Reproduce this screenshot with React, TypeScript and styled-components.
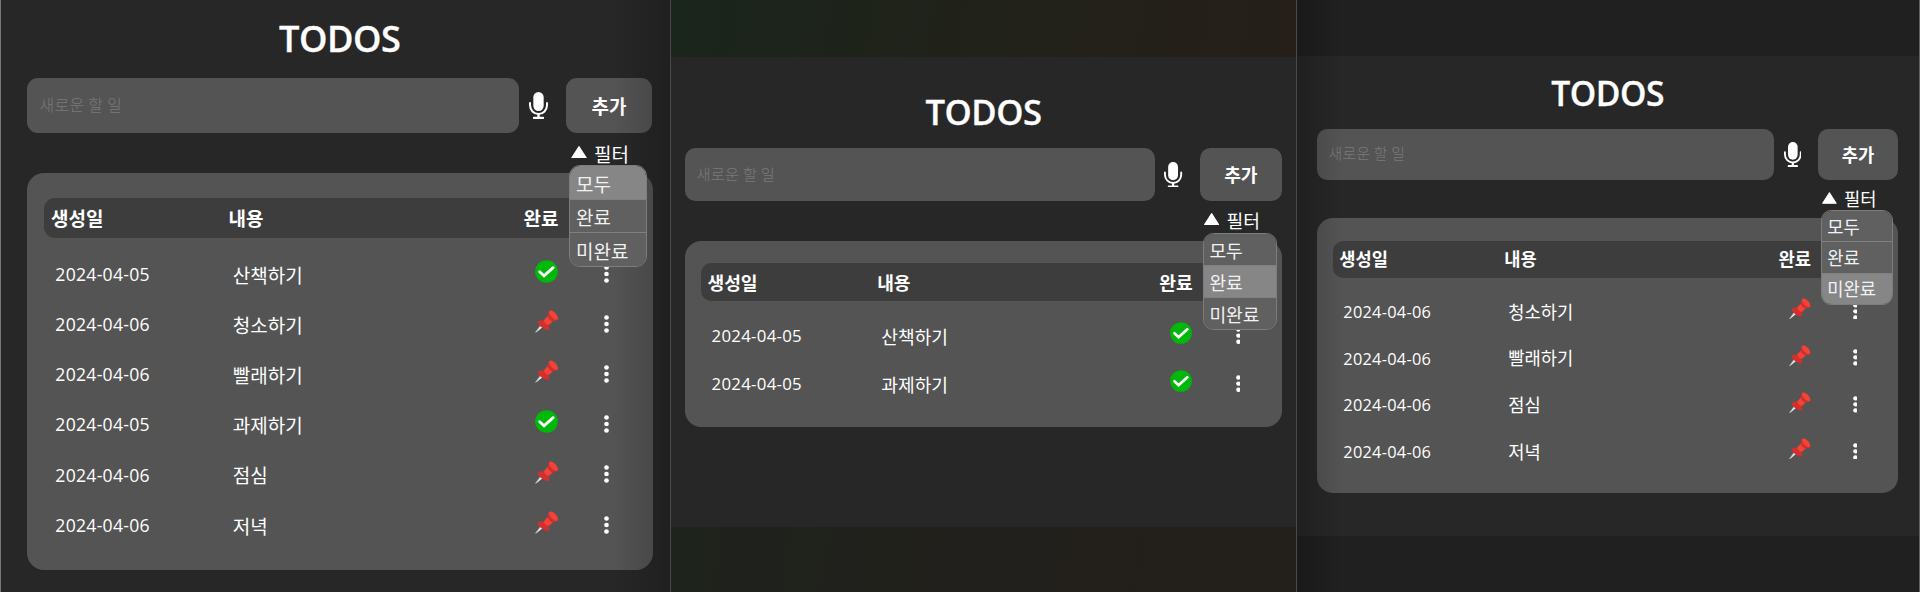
import React from "react";
import styled, { createGlobalStyle, css } from "styled-components";

const GlobalStyle = createGlobalStyle`
  * { box-sizing: border-box; }
  body { margin: 0; background: #272727; }
`;

/* Every length of a board is given in units of its own scale. */
const u = (n: number) => `calc(${n} * var(--u))`;

const Screen = styled.div`
  display: flex;
  height: 592px;
  overflow: hidden;
  font-family: "Open Sans", "Noto Sans CJK KR", sans-serif;
  color: #fff;
`;

type Shade = "left" | "right" | "none";

const shades = {
  left: css`background: linear-gradient(90deg, rgba(0, 0, 0, 0.2), rgba(0, 0, 0, 0) 46px);`,
  right: css`background: linear-gradient(270deg, rgba(0, 0, 0, 0.2), rgba(0, 0, 0, 0) 58px);`,
  none: css`display: none;`,
};

const Board = styled.section<{ $width: number; $scale: number; $shade: Shade; $line: string; $last?: boolean }>`
  --u: ${(p) => p.$scale}px;
  position: relative;
  flex: none;
  display: flex;
  flex-direction: column;
  width: ${(p) => p.$width}px;
  border-left: 1px solid ${(p) => p.$line};
  ${(p) => p.$last && "border-right: 1px solid #626262;"}
  &::after {
    content: "";
    position: absolute;
    inset: 0;
    pointer-events: none;
    ${(p) => shades[p.$shade]}
  }
`;

const Strip = styled.div<{ $height: number; $fill: string }>`
  flex: none;
  height: ${(p) => p.$height}px;
  background: ${(p) => p.$fill};
`;

const Main = styled.main<{ $left: number; $top: number }>`
  flex: 1;
  min-height: 0;
  background: #272727;
  padding: ${(p) => p.$top}px 0 0 ${(p) => p.$left}px;
`;

const Title = styled.h1<{ $shift: number }>`
  width: ${u(625.5)};
  height: ${u(50)};
  margin: 0 0 ${u(14)};
  padding-top: ${(p) => p.$shift}px;
  text-align: center;
  font-size: ${u(36.2)};
  line-height: ${u(48)};
  font-weight: 600;
  letter-spacing: ${u(-0.5)};
  -webkit-text-stroke: 0.3px #fff;
`;

const Form = styled.div`
  display: flex;
  align-items: center;
  width: ${u(625.5)};
  height: ${u(55)};
`;

const Field = styled.input`
  width: ${u(492)};
  height: 100%;
  border: 0;
  border-radius: ${u(11)};
  background: #545454;
  color: #fff;
  padding: 0 ${u(12.5)} ${u(4)};
  font: 300 ${u(16)} "Noto Sans CJK KR", sans-serif;
  letter-spacing: ${u(0.25)};
  outline: none;
  &::placeholder { color: #7a7a7a; opacity: 1; }
`;

const MicButton = styled.span`
  display: flex;
  width: ${u(47)};
  padding-left: ${u(10)};
  svg { width: ${u(19)}; height: ${u(27)}; }
`;

const AddButton = styled.button`
  width: ${u(86)};
  height: 100%;
  padding: 0 0 ${u(1)};
  border: 0;
  border-radius: ${u(11)};
  background: #545454;
  color: #fff;
  font: 700 ${u(19)} "Noto Sans CJK KR", sans-serif;
`;

const FilterBar = styled.div<{ $height: number }>`
  position: relative;
  z-index: 1;
  display: flex;
  align-items: flex-start;
  width: ${u(625.5)};
  height: ${(p) => p.$height}px;
  padding: ${u(8.5)} 0 0 ${u(543.5)};
`;

const FilterLabel = styled.span`
  display: flex;
  align-items: center;
  gap: ${u(7.5)};
  height: ${u(24)};
  font: 400 ${u(19)} / ${u(24)} "Noto Sans CJK KR", sans-serif;
  svg { width: ${u(16)}; height: ${u(12.8)}; margin-top: ${u(-3)}; }
`;

const Menu = styled.div`
  position: absolute;
  top: calc(100% - 8px);
  left: ${u(542)};
  width: ${u(77.8)};
  height: ${u(101.7)};
  display: flex;
  flex-direction: column;
  overflow: hidden;
  border: 1px solid #7d7d7d;
  border-radius: ${u(11)};
`;

const MenuItem = styled.span<{ $active: boolean }>`
  flex: 1;
  display: flex;
  align-items: center;
  padding: 1px 0 0 ${u(6)};
  background: ${(p) => (p.$active ? "#868686" : "#606060")};
  color: #f2f2f2;
  font: 400 ${u(19)} / 1 "Noto Sans CJK KR", sans-serif;
  & + & { border-top: 1px solid #808080; }
`;

const Card = styled.div<{ $pad: number }>`
  width: ${u(625.5)};
  padding: ${(p) => p.$pad}px ${u(17)} ${u(19.4)};
  border-radius: ${u(17)};
  background: #545454;
`;

const columns = css`
  display: grid;
  grid-template-columns: ${u(177.5)} 1fr ${u(60)} ${u(60)};
  align-items: center;
`;

const HeadRow = styled.div`
  ${columns}
  height: ${u(40)};
  margin-bottom: ${u(11.6)};
  padding: 0 ${u(4.5)} ${u(0.8)} ${u(7)};
  border-radius: ${u(11)};
  background: #3d3d3d;
  font: 700 ${u(19)} / 1 "Noto Sans CJK KR", sans-serif;
`;

const Row = styled.div`
  ${columns}
  height: ${u(50.2)};
  padding-left: ${u(11.3)};
`;

const Centered = styled.span`
  display: flex;
  justify-content: center;
`;

const DateText = styled.span`
  font-size: ${u(17.6)};
  line-height: 1;
  letter-spacing: ${u(0.28)};
`;

const TaskText = styled.span`
  padding-bottom: ${u(1)};
  font: 400 ${u(19)} / 1 "Noto Sans CJK KR", sans-serif;
`;

const StatusCell = styled(Centered)`
  padding: 0 0 ${u(6.6)} ${u(2)};
  svg { width: ${u(23)}; height: ${u(23)}; }
`;

const MoreCell = styled(Centered)`
  padding: 0 0 ${u(2)} ${u(1)};
  svg { width: ${u(5)}; height: ${u(18)}; }
`;

const MicIcon = () => (
  <svg viewBox="0 0 57 81">
    <rect x="13" y="0" width="31" height="57" rx="15.5" fill="#fff" />
    <path d="M3 33v7a25.500 26 0 0 0 51 0v-7" fill="none" stroke="#fff" strokeWidth="6" strokeLinecap="round" />
    <rect x="25" y="65" width="7" height="12" fill="#fff" />
    <rect x="12" y="74" width="33" height="7" rx="2.500" fill="#fff" />
  </svg>
);

const TriangleIcon = () => (
  <svg viewBox="0 0 15 12">
    <path d="M7.500.6 14.400 11.400H.6z" fill="#fff" stroke="#fff" strokeWidth="1" strokeLinejoin="round" />
  </svg>
);

const DoneIcon = () => (
  <svg viewBox="0 0 69 69">
    <circle cx="34.500" cy="34.500" r="34" fill="#00b80a" />
    <path d="M14 35.500 27 47.500 54.500 23" fill="none" stroke="#fff" strokeWidth="8.500" strokeLinecap="round" strokeLinejoin="miter" />
  </svg>
);

const PinIcon = () => (
  <svg viewBox="0 0 69 69">
    <path d="M16 46 22 52 3 67.500Q0 69 1 66z" fill="#b4bcc0" />
    <path d="M18 48 22 52 3 67.500z" fill="#e8ecee" />
    <path d="M10 34C18 28 27 30 34 37S46 52 41 59Q37 62 26 56 12 48 8 39 8 36 10 34z" fill="#d32f2f" />
    <path d="M27 31 42 13 58 29 43 44Q33 42 27 31z" fill="#f44336" />
    <path d="M37 23 48 34 40 45Q31 42 26 32z" fill="#f44336" />
    <path d="M42 13 58 29 52 35Q43 29 37 20z" fill="#d32f2f" />
    <ellipse cx="54" cy="17" rx="18.500" ry="9.500" transform="rotate(47 54 17)" fill="#d32f2f" />
    <ellipse cx="55.500" cy="15.500" rx="17.500" ry="8" transform="rotate(47 55.500 15.500)" fill="#f44336" />
  </svg>
);

const MoreIcon = () => (
  <svg viewBox="0 0 15 54">
    {[7.5, 27, 46.5].map((y) => (
      <circle key={y} cx="7.500" cy={y} r="7" fill="#fff" />
    ))}
  </svg>
);

type Todo = { date: string; task: string; done: boolean };

const todos: Todo[] = [
  { date: "2024-04-05", task: "산책하기", done: true },
  { date: "2024-04-06", task: "청소하기", done: false },
  { date: "2024-04-06", task: "빨래하기", done: false },
  { date: "2024-04-05", task: "과제하기", done: true },
  { date: "2024-04-06", task: "점심", done: false },
  { date: "2024-04-06", task: "저녁", done: false },
];

const filters = ["모두", "완료", "미완료"] as const;
type Filter = (typeof filters)[number];

const matches = (todo: Todo, filter: Filter) =>
  filter === "모두" || todo.done === (filter === "완료");

type TodoBoardProps = {
  filter: Filter;
  width: number;
  scale: number;
  left: number;
  top: number;
  titleShift: number;
  filterHeight: number;
  cardPad: number;
  line: string;
  shade: Shade;
  last?: boolean;
  strips?: { top: number; bottom: number; topFill: string; bottomFill: string };
};

const TodoBoard = (p: TodoBoardProps) => (
  <Board $width={p.width} $scale={p.scale} $shade={p.shade} $line={p.line} $last={p.last}>
    {p.strips && <Strip $height={p.strips.top} $fill={p.strips.topFill} />}
    <Main $left={p.left} $top={p.top}>
      <Title $shift={p.titleShift}>TODOS</Title>
      <Form>
        <Field placeholder="새로운 할 일" />
        <MicButton><MicIcon /></MicButton>
        <AddButton>추가</AddButton>
      </Form>
      <FilterBar $height={p.filterHeight}>
        <FilterLabel><TriangleIcon />필터</FilterLabel>
        <Menu>
          {filters.map((name) => (
            <MenuItem key={name} $active={name === p.filter}>{name}</MenuItem>
          ))}
        </Menu>
      </FilterBar>
      <Card $pad={p.cardPad}>
        <HeadRow>
          <span>생성일</span>
          <span>내용</span>
          <Centered>완료</Centered>
        </HeadRow>
        {todos.filter((t) => matches(t, p.filter)).map((t) => (
          <Row key={t.task}>
            <DateText>{t.date}</DateText>
            <TaskText>{t.task}</TaskText>
            <StatusCell>{t.done ? <DoneIcon /> : <PinIcon />}</StatusCell>
            <MoreCell><MoreIcon /></MoreCell>
          </Row>
        ))}
      </Card>
    </Main>
    {p.strips && <Strip $height={p.strips.bottom} $fill={p.strips.bottomFill} />}
  </Board>
);

export default function App() {
  return (
    <>
      <GlobalStyle />
      <Screen>
        <TodoBoard filter="모두" width={670} scale={1} left={26} top={14} titleShift={0} filterHeight={40.3} cardPad={24.7} line="#777" shade="right" />
        <TodoBoard
          filter="완료" width={626} scale={0.956} left={13.5} top={30} titleShift={2} filterHeight={40} cardPad={22.5} line="#4a4a4a" shade="none"
          strips={{
            top: 57,
            bottom: 65,
            topFill: "linear-gradient(100deg, #1a251b, #21221a 50%, #261f19)",
            bottomFill: "linear-gradient(100deg, #1e231c, #22201c 50%, #231f1b)",
          }}
        />
        <TodoBoard
          filter="미완료" width={624} scale={0.9295} left={20} top={13.7} titleShift={1.5} filterHeight={38} cardPad={22.5} line="#4a4a4a" shade="left" last
          strips={{ top: 56, bottom: 56, topFill: "#202020", bottomFill: "#202020" }}
        />
      </Screen>
    </>
  );
}
